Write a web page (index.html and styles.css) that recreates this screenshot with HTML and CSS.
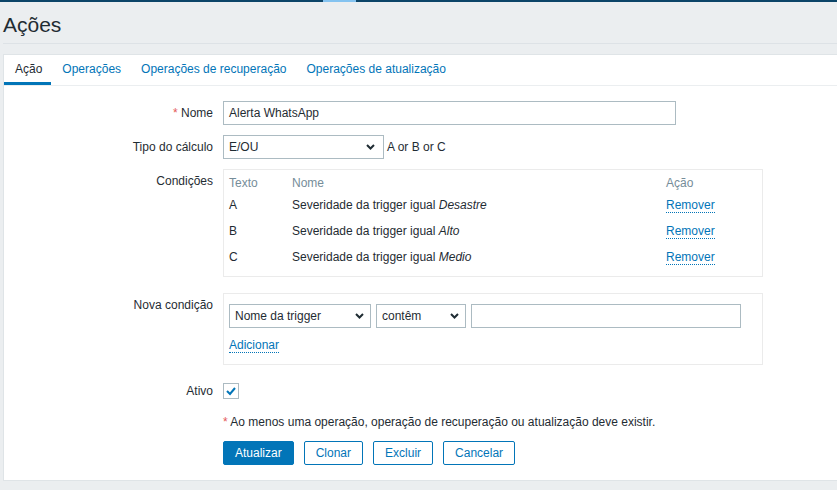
FILE: index.html
```html
<!DOCTYPE html>
<html lang="pt">
<head>
<meta charset="utf-8">
<title>Ações</title>
<link rel="stylesheet" href="styles.css">
</head>
<body>
<div class="topbar"><div class="topbar-left"></div><div class="topbar-active"></div><div class="topbar-right"></div></div>
<header class="header"><h1 class="title">Ações</h1></header>
<main class="panel">
  <nav class="tabs">
    <span class="tab active">Ação</span>
    <span class="tab">Operações</span>
    <span class="tab">Operações de recuperação</span>
    <span class="tab">Operações de atualização</span>
  </nav>
  <div class="form">
    <label class="label"><span class="req">*</span> Nome</label>
    <div class="field"><div class="input name-input">Alerta WhatsApp</div></div>

    <label class="label">Tipo do cálculo</label>
    <div class="field inline">
      <div class="select calc-select"><span>E/OU</span><svg class="chev" width="9" height="6" viewBox="0 0 9 6"><polyline points="1,1 4.5,4.5 8,1" fill="none" stroke="#1f2c33" stroke-width="2"/></svg></div>
      <span class="formula">A or B or C</span>
    </div>

    <label class="label">Condições</label>
    <div class="field">
      <div class="box cond-box">
        <table class="cond-table">
          <thead><tr><th class="c1">Texto</th><th class="c2">Nome</th><th class="c3">Ação</th></tr></thead>
          <tbody>
            <tr><td>A</td><td>Severidade da trigger igual <em>Desastre</em></td><td><a class="link">Remover</a></td></tr>
            <tr><td>B</td><td>Severidade da trigger igual <em>Alto</em></td><td><a class="link">Remover</a></td></tr>
            <tr><td>C</td><td>Severidade da trigger igual <em>Medio</em></td><td><a class="link">Remover</a></td></tr>
          </tbody>
        </table>
      </div>
    </div>

    <label class="label nova-label">Nova condição</label>
    <div class="field nova-field">
      <div class="box new-box">
        <div class="new-row">
          <div class="select sel-type"><span>Nome da trigger</span><svg class="chev" width="9" height="6" viewBox="0 0 9 6"><polyline points="1,1 4.5,4.5 8,1" fill="none" stroke="#1f2c33" stroke-width="2"/></svg></div>
          <div class="select sel-op"><span>contêm</span><svg class="chev" width="9" height="6" viewBox="0 0 9 6"><polyline points="1,1 4.5,4.5 8,1" fill="none" stroke="#1f2c33" stroke-width="2"/></svg></div>
          <div class="input val-input"></div>
        </div>
        <div class="add-row"><a class="link">Adicionar</a></div>
      </div>
    </div>

    <label class="label ativo-label">Ativo</label>
    <div class="field ativo-field">
      <span class="checkbox"><svg width="14" height="14" viewBox="0 0 14 14"><polyline points="3,7 6,10 11,4" fill="none" stroke="#0275b8" stroke-width="2"/></svg></span>
    </div>

    <div class="field note"><span class="req">*</span> Ao menos uma operação, operação de recuperação ou atualização deve existir.</div>

    <div class="field buttons">
      <button class="btn primary">Atualizar</button>
      <button class="btn">Clonar</button>
      <button class="btn">Excluir</button>
      <button class="btn">Cancelar</button>
    </div>
  </div>
</main>
</body>
</html>
```
FILE: styles.css
```css
* { box-sizing: border-box; }
html, body { margin: 0; padding: 0; }
body {
  background: #ebeef0;
  font-family: Arial, "Liberation Sans", sans-serif;
  font-size: 12px;
  color: #1f2c33;
  width: 837px;
  height: 490px;
  overflow: hidden;
}
.topbar { display: flex; height: 2px; }
.topbar-left { width: 323px; background: #0b4468; }
.topbar-active { width: 33px; background: #84c3f0; }
.topbar-right { flex: 1; background: #0b4468; }

.header {
  margin-left: 3px;
  height: 42px;
  border-bottom: 1px solid #dde2e6;
  padding-top: 11px;
}
.title {
  margin: 0;
  font-size: 21px;
  font-weight: normal;
  line-height: 24px;
  color: #1f2c33;
}

.panel {
  margin: 10px 0 0 3px;
  background: #fff;
  border: 1px solid #dfe4e7;
  border-right: none;
  height: 427px;
}
.tabs {
  display: flex;
  height: 31px;
  border-bottom: 1px solid #ebeef0;
}
.tab {
  height: 30px;
  padding: 1px 9px 0 11px;
  line-height: 26px;
  color: #0275b8;
  border-bottom: 3px solid transparent;
  white-space: nowrap;
}
.tab.active {
  color: #1f2c33;
  border-bottom-color: #0275b8;
}

.form {
  display: grid;
  grid-template-columns: 219px 1fr;
  row-gap: 10px;
  padding-top: 15px;
  align-items: start;
}
.label {
  grid-column: 1;
  text-align: right;
  padding: 5px 10px 0 0;
  line-height: 14px;
}
.field { grid-column: 2; }
.inline { display: flex; align-items: center; }
.req { color: #e45959; }

.input {
  height: 24px;
  border: 1px solid #acbbc2;
  background: #fff;
  padding: 0 5px;
  line-height: 22px;
}
.name-input { width: 453px; }

.select {
  height: 24px;
  border: 1px solid #acbbc2;
  background: #fff;
  padding: 0 5px;
  display: flex;
  align-items: center;
  justify-content: space-between;
  line-height: 22px;
}
.select .chev { margin-right: 1px; }
.calc-select { width: 161px; padding-right: 7px; }
.formula { margin-left: 3px; }

.box {
  width: 540px;
  border: 1px solid #ebebeb;
}
.cond-box { padding: 4px 5px 6px 5px; }
.cond-table { border-collapse: collapse; width: 100%; }
.cond-table th {
  font-weight: normal;
  color: #768d99;
  text-align: left;
  height: 18px;
  padding: 0;
  line-height: 14px;
}
.cond-table td {
  height: 26px;
  padding: 0;
  line-height: 14px;
}
.cond-table .c1 { width: 63px; }
.cond-table .c2 { width: 374px; }
.link {
  color: #0275b8;
  border-bottom: 1px dotted #0275b8;
  cursor: pointer;
}

.nova-label, .nova-field { margin-top: 6px; }
.new-box { padding: 10px 5px 12px 5px; }
.new-row { display: flex; gap: 5px; }
.sel-type { width: 142px; padding-right: 5px; }
.sel-op { width: 90px; padding-right: 5px; }
.val-input { width: 270px; }
.add-row { margin-top: 10px; line-height: 14px; }

.ativo-label, .ativo-field { margin-top: 8px; }
.ativo-label { padding-top: 1px; }
.ativo-field { height: 16px; }
.checkbox {
  display: flex;
  align-items: center;
  justify-content: center;
  width: 16px;
  height: 16px;
  border: 1px solid #acbbc2;
}

.note { margin-top: 6px; line-height: 14px; }

.buttons { display: flex; gap: 10px; margin-top: 2px; }
.btn {
  height: 24px;
  padding: 0 11px;
  font-family: Arial, "Liberation Sans", sans-serif;
  font-size: 12px;
  color: #0275b8;
  background: #fff;
  border: 1px solid #0275b8;
  border-radius: 2px;
  line-height: 22px;
}
.btn.primary { background: #0275b8; color: #fff; }
```
